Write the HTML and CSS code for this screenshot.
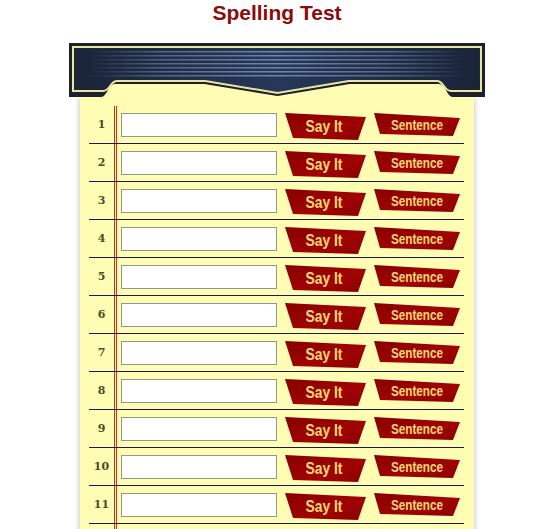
FILE: index.html
```html
<!DOCTYPE html>
<html>
<head>
<meta charset="utf-8">
<link rel="stylesheet" href="styles.css">
</head>
<body>
<h1 class="title">Spelling Test</h1>
<svg class="banner" width="416" height="55" viewBox="0 0 415 55" preserveAspectRatio="none">
  <defs>
    <linearGradient id="navy" x1="0" y1="0" x2="1" y2="0">
      <stop offset="0" stop-color="#1a2438"/>
      <stop offset="0.5" stop-color="#26375a"/>
      <stop offset="1" stop-color="#1a2438"/>
    </linearGradient>
    <linearGradient id="stripe" x1="0" y1="0" x2="1" y2="0">
      <stop offset="0" stop-color="#6a7fa0" stop-opacity="0"/>
      <stop offset="0.2" stop-color="#6a7fa0" stop-opacity="0.7"/>
      <stop offset="0.5" stop-color="#7a8fb0" stop-opacity="0.9"/>
      <stop offset="0.8" stop-color="#6a7fa0" stop-opacity="0.7"/>
      <stop offset="1" stop-color="#6a7fa0" stop-opacity="0"/>
    </linearGradient>
    <clipPath id="inner">
      <path d="M4,4 H411 V48 H381 C374,48 374,38 367,38 H279 L208,50 L136,38 H48 C41,38 41,48 34,48 H4 Z"/>
    </clipPath>
  </defs>
  <rect x="11" y="30" width="394" height="25" fill="#fffdb3"/>
  <path d="M0,0 H415 V54 H383 C377,54 376,41 369,41 H280 L208,53 L135,41 H46 C39,41 38,54 32,54 H0 Z" fill="#1b2130"/>
  <path d="M4,4 H411 V48 H381 C374,48 374,38 367,38 H279 L208,50 L136,38 H48 C41,38 41,48 34,48 H4 Z" fill="url(#navy)"/>
  <g clip-path="url(#inner)" fill="url(#stripe)">
    <rect x="20" y="8" width="375" height="1.5"/>
    <rect x="20" y="12" width="375" height="1.5"/>
    <rect x="20" y="16" width="375" height="1.5"/>
    <rect x="20" y="20" width="375" height="1.5"/>
    <rect x="20" y="24" width="375" height="1.5"/>
    <rect x="20" y="28" width="375" height="1.5"/>
    <rect x="20" y="32" width="375" height="1.5"/>
  </g>
  <path d="M4,4 H411 V48 H381 C374,48 374,38 367,38 H279 L208,50 L136,38 H48 C41,38 41,48 34,48 H4 Z" fill="none" stroke="#ece69c" stroke-width="2"/>
</svg>
<div class="paper">
  <div class="rows" id="rows"></div>
  <div class="row blank"><div class="num"></div><div class="field"></div></div>
</div>
<script src="app.js"></script>
</body>
</html>
```
FILE: app.js
```js
(function () {
  var rows = document.getElementById('rows');
  var html = '';
  for (var i = 1; i <= 11; i++) {
    html += '<div class="row">' +
      '<div class="num">' + i + '</div>' +
      '<div class="field">' +
        '<input class="word" type="text">' +
        '<svg class="btn say" width="82" height="30" viewBox="0 0 82 30">' +
          '<defs><linearGradient id="g' + i + 'a" x1="0" y1="0" x2="1" y2="1"><stop offset="0" stop-color="#880000"/><stop offset="0.6" stop-color="#a00404"/><stop offset="1" stop-color="#8a0000"/></linearGradient></defs>' +
          '<polygon points="0,1 81,5 73,28 8,26" fill="url(#g' + i + 'a)"/>' +
          '<text x="39" y="19.5" text-anchor="middle" textLength="37" lengthAdjust="spacingAndGlyphs" class="btxt say-t">Say It</text>' +
        '</svg>' +
        '<svg class="btn sent" width="87" height="26" viewBox="0 0 87 26">' +
          '<defs><linearGradient id="g' + i + 'b" x1="0" y1="0" x2="1" y2="1"><stop offset="0" stop-color="#880000"/><stop offset="0.6" stop-color="#a00404"/><stop offset="1" stop-color="#8a0000"/></linearGradient></defs>' +
          '<polygon points="0,1 86,6 79,24 6,22" fill="url(#g' + i + 'b)"/>' +
          '<text x="43" y="17.7" text-anchor="middle" textLength="52" lengthAdjust="spacingAndGlyphs" class="btxt sent-t">Sentence</text>' +
        '</svg>' +
      '</div>' +
    '</div>';
  }
  rows.innerHTML = html;
})();
```
FILE: styles.css
```css
html { overflow: hidden; }
body {
  margin: 0;
  padding-right: 1px;
  background: #ffffff;
  font-family: "Liberation Sans", Arial, sans-serif;
}
.title {
  margin: 0;
  padding-top: 1px;
  font-size: 21px;
  line-height: 24px;
  font-weight: bold;
  color: #8b0a0a;
  text-align: center;
}
.banner {
  display: block;
  margin: 18px auto 0;
  position: relative;
  z-index: 2;
}
.paper {
  width: 394px;
  margin: 0 auto;
  background: #fffdb3;
  box-shadow: 0 0 6px rgba(0, 0, 0, 0.28);
  padding: 8px 10px 0 9px;
  box-sizing: border-box;
  position: relative;
  z-index: 1;
}
.row {
  display: flex;
  align-items: flex-start;
  height: 37px;
  border-bottom: 1px solid #1b1b4e;
}
.num {
  width: 25px;
  height: 37px;
  line-height: 37px;
  text-align: center;
  border-right: 1px solid #b8321a;
  font-family: "DejaVu Serif", "Liberation Serif", serif;
  font-weight: bold;
  font-size: 11px;
  color: #4f4a26;
}
.field {
  display: flex;
  align-items: flex-start;
  height: 37px;
  margin-left: 1px;
  padding-left: 4px;
  border-left: 1px solid #e62a22;
}
.word {
  width: 156px;
  height: 24px;
  box-sizing: border-box;
  margin: 7px 8px 0 0;
  border: 1px solid #8c9c86;
  background: #ffffff;
  padding: 0 3px;
  outline: none;
}
.btn {
  display: block;
  margin-top: 6px;
}
.say { margin-right: 7px; }
.btxt {
  font-family: "Liberation Sans", Arial, sans-serif;
  font-weight: bold;
  fill: #ffd874;
}
.say-t { font-size: 16.5px; }
.sent-t { font-size: 14px; }
```
